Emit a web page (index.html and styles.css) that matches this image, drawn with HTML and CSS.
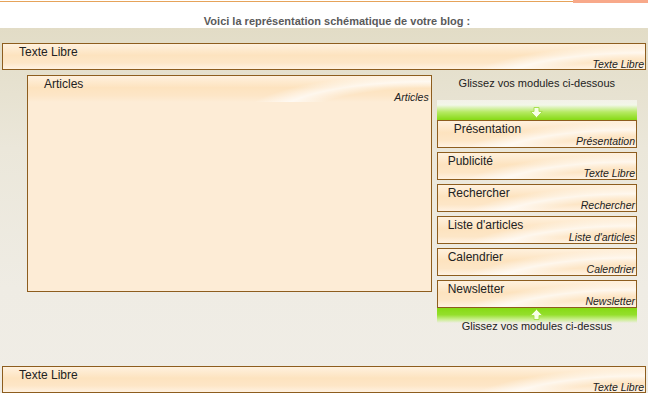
FILE: index.html
```html
<!DOCTYPE html>
<html lang="fr">

<head>
    <meta charset="UTF-8">
    <meta name="viewport" content="width=device-width, initial-scale=1.0">
    <title>Disposition du blog</title>
    <link rel="stylesheet" href="styles.css">
</head>

<body>
    <div class="topline">
        <div class="line"></div>
        <div class="tab"></div>
    </div>
    <p class="intro">Voici la représentation schématique de votre blog :</p>

    <div class="stage">
        <div class="mod wide">
            <span class="name">Texte Libre</span>
            <span class="kind">Texte Libre</span>
        </div>

        <div class="cols">
            <div class="main">
                <div class="mod head">
                    <span class="name">Articles</span>
                    <span class="kind">Articles</span>
                </div>
            </div>

            <div class="side">
                <p class="hint">Glissez vos modules ci-dessous</p>
                <div class="drop down">
                    <svg width="13" height="11" viewBox="0 0 13 11"><path d="M4 0.5h5v4h3.5l-6 6-6-6h3.5z" fill="#f6ffe6" stroke="#a8e050" stroke-width="1"/></svg>
                </div>
                <div class="mod first">
                    <span class="name">Présentation</span>
                    <span class="kind">Présentation</span>
                </div>
                <div class="mod">
                    <span class="name">Publicité</span>
                    <span class="kind">Texte Libre</span>
                </div>
                <div class="mod">
                    <span class="name">Rechercher</span>
                    <span class="kind">Rechercher</span>
                </div>
                <div class="mod">
                    <span class="name">Liste d'articles</span>
                    <span class="kind">Liste d'articles</span>
                </div>
                <div class="mod">
                    <span class="name">Calendrier</span>
                    <span class="kind">Calendrier</span>
                </div>
                <div class="mod">
                    <span class="name">Newsletter</span>
                    <span class="kind">Newsletter</span>
                </div>
                <div class="drop up">
                    <svg width="13" height="11" viewBox="0 0 13 11"><path d="M4 10.5h5v-4h3.5l-6-6-6 6h3.5z" fill="#f6ffe6" stroke="#a8e050" stroke-width="1"/></svg>
                </div>
                <p class="hint">Glissez vos modules ci-dessus</p>
            </div>
        </div>

        <div class="mod wide bottom">
            <span class="name">Texte Libre</span>
            <span class="kind">Texte Libre</span>
        </div>
    </div>
</body>

</html>
```

FILE: styles.css
```css
* {
    margin: 0;
    padding: 0;
    box-sizing: border-box;
}
body {
    width: 648px;
    height: 393px;
    overflow: hidden;
    font-family: "Liberation Sans", Arial, sans-serif;
    background-color: #fff;
    color: #222;
}
.topline {
    display: flex;
    align-items: flex-start;
}
.topline .line {
    flex: 1;
    height: 2px;
    border-bottom: 1px solid #e6a35a;
}
.topline .tab {
    width: 75px;
    height: 3px;
    background-color: #f8a98a;
}
.intro {
    height: 25px;
    padding-top: 12px;
    padding-left: 26px;
    text-align: center;
    font-size: 11px;
    font-weight: bold;
    color: #5a5a5a;
}
.stage {
    height: 365px;
    padding: 15px 2px 0;
    background: linear-gradient(#e2dcc6 0px, #ebe7da 120px, #efece4 260px, #f0ede6 100%);
}

/* un module */
.mod {
    height: 28px;
    border: 1px solid #8d5d1e;
    display: flex;
    flex-direction: column;
    justify-content: space-between;
    background:
        radial-gradient(ellipse 190px 44px at 100% 160%, transparent 66%, rgba(255,255,255,0.7) 82%, transparent 100%) right top / 190px 28px no-repeat,
        linear-gradient(#fff1de 0%, #fde3bf 45%, #fde6c7 75%, #fff2e2 100%);
}
.mod .name {
    font-size: 12px;
    line-height: 14px;
    padding: 1px 0 0 10px;
}
.mod .kind {
    font-size: 10.5px;
    font-style: italic;
    line-height: 11px;
    text-align: right;
    padding-right: 1px;
    color: #222;
}
.mod.wide {
    height: 27px;
}
.mod.wide .name {
    padding-left: 16px;
}
.mod.bottom {
    margin-top: 33px;
}

.cols {
    display: flex;
    margin: 5px 9px 0 25px;
    gap: 5px;
}
.main {
    width: 406px;
    height: 217px;
    border: 1px solid #8d5d1e;
    background-color: #fdecd6;
}
.main .mod.head {
    border: none;
    height: 26px;
    background:
        radial-gradient(ellipse 190px 44px at 100% 160%, transparent 66%, rgba(255,255,255,0.7) 82%, transparent 100%) right top / 190px 26px no-repeat,
        linear-gradient(#fff1de 0%, #fde3bf 45%, #fde6c7 75%, #fdecd6 100%);
}
.main .mod.head .name {
    padding-left: 16px;
}
.main .mod.head .kind {
    line-height: 9px;
    padding-right: 2px;
}

.side {
    width: 201px;
    display: flex;
    flex-direction: column;
    gap: 4px;
}
.hint {
    font-size: 11px;
    line-height: 13px;
    text-align: center;
    color: #222;
}
.side .hint:first-child {
    margin-top: 2px;
    margin-bottom: 6px;
}
.side .hint:last-child {
    margin-top: -7px;
}
.drop {
    height: 20px;
    display: flex;
    justify-content: center;
}
.drop.down {
    margin-bottom: -4px;
    align-items: flex-end;
    padding-bottom: 2px;
    background: linear-gradient(rgba(255,255,255,0.5) 0%, #f2f7e8 25%, #b6ea63 60%, #86da14 100%);
}
.drop.up {
    height: 15px;
    margin-top: -4px;
    align-items: flex-start;
    padding-top: 1px;
    background: linear-gradient(#86da14 0%, #94df2c 45%, #c8ee8c 75%, rgba(255,255,255,0) 100%);
}
.mod.first .name {
    padding-left: 16px;
}
```
